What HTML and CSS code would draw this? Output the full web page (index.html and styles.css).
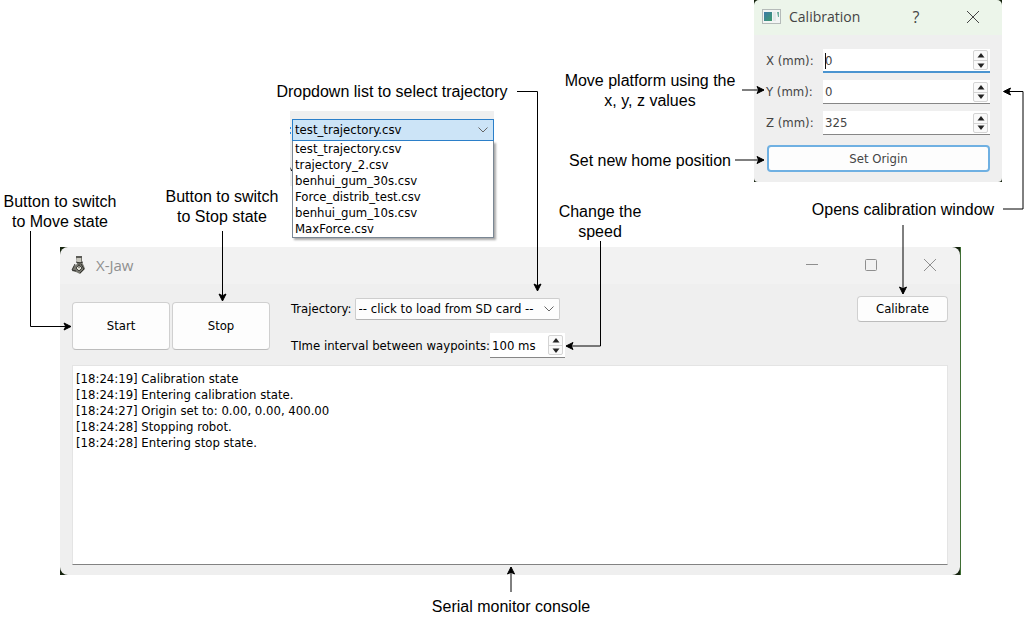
FILE: index.html
```html
<!DOCTYPE html>
<html lang="en">
<head>
<meta charset="utf-8">
<title>X-Jaw control window</title>
<link rel="stylesheet" href="styles.css">
</head>
<body>
<main class="canvas">

  <section class="window main-window" aria-label="X-Jaw">
    <header class="titlebar">
      <svg class="app-icon" width="16" height="20" viewBox="0 0 16 20" aria-hidden="true">
        <path d="M5 1h6v6l2 4 1 3-5 5-4-2-4-1 1-4 4-3z" fill="#77776f"/>
        <path d="M5 1h6v2H5z" fill="#5b5b56"/>
        <path d="M6 3h4v4H6z" fill="#c9c8bf"/>
        <path d="M5 7l4 1 3-1M4 9l-3 6 4 1M10 9l3 5-4 4" fill="none" stroke="#33332f"/>
        <path d="M5 13l3-3 3 3-3 3z" fill="#deddd3" stroke="#44443f"/>
        <path d="M8 9v4" stroke="#44443f"/>
      </svg>
      <h1 class="title">X-Jaw</h1>
      <div class="window-buttons">
        <button class="window-button" aria-label="Minimize"><svg width="14" height="14" viewBox="0 0 14 14"><path d="M1 6.500h12"/></svg></button>
        <button class="window-button" aria-label="Maximize"><svg width="14" height="14" viewBox="0 0 14 14"><rect x="1.500" y="1.500" width="11" height="11" rx="1"/></svg></button>
        <button class="window-button" aria-label="Close"><svg width="14" height="14" viewBox="0 0 14 14"><path d="M1 1l12 12M13 1L1 13"/></svg></button>
      </div>
    </header>
    <div class="window-body">
      <div class="toolbar">
        <div class="run-buttons">
          <button class="button run">Start</button>
          <button class="button run">Stop</button>
        </div>
        <div class="settings">
          <div class="field trajectory-field">
            <label for="trajectory">Trajectory:</label>
            <span class="combo">
              <select id="trajectory"><option>-- click to load from SD card --</option></select>
              <svg class="chevron" width="10" height="6" viewBox="0 0 10 6" aria-hidden="true"><path d="M.5.5L5 5 9.500.5"/></svg>
            </span>
          </div>
          <div class="field">
            <label for="interval">TIme interval between waypoints:</label>
            <span class="spin interval">
              <input id="interval" type="text" value="100 ms">
              <span class="steps">
                <button aria-label="Increase interval"><svg width="8" height="5" viewBox="0 0 8 5"><path d="M4 0l3.500 4.500h-7z"/></svg></button>
                <button aria-label="Decrease interval"><svg width="8" height="5" viewBox="0 0 8 5"><path d="M4 5L.5.5h7z"/></svg></button>
              </span>
            </span>
          </div>
        </div>
        <button class="button calibrate">Calibrate</button>
      </div>
      <textarea class="console" aria-label="Serial monitor console" readonly>[18:24:19] Calibration state
[18:24:19] Entering calibration state.
[18:24:27] Origin set to: 0.00, 0.00, 400.00
[18:24:28] Stopping robot.
[18:24:28] Entering stop state.</textarea>
    </div>
  </section>

  <section class="dropdown" aria-label="Trajectory list">
    <svg class="cut-text" width="2" height="60" viewBox="0 0 2 60" aria-hidden="true"><path d="M0 16h1v2H0zM0 21h1v2H0z" fill="#2f8be0"/><path d="M0 56l2 3v1H1z" fill="#111"/></svg>
    <div class="dropdown-current">
      <select aria-label="Selected trajectory"><option>test_trajectory.csv</option></select>
      <svg class="chevron" width="10" height="6" viewBox="0 0 10 6" aria-hidden="true"><path d="M.5.5L5 5 9.500.5"/></svg>
    </div>
    <ul class="dropdown-list" role="listbox" aria-label="Trajectories">
      <li role="option">test_trajectory.csv</li>
      <li role="option">trajectory_2.csv</li>
      <li role="option">benhui_gum_30s.csv</li>
      <li role="option">Force_distrib_test.csv</li>
      <li role="option">benhui_gum_10s.csv</li>
      <li role="option">MaxForce.csv</li>
    </ul>
  </section>

  <section class="window dialog" aria-label="Calibration">
    <header class="titlebar">
      <svg class="dialog-icon" width="19" height="15" viewBox="0 0 19 15" aria-hidden="true">
        <defs><linearGradient id="pane" x2="1" y2="1"><stop stop-color="#3d79a8"/><stop offset="1" stop-color="#3f9b6d"/></linearGradient></defs>
        <rect x=".5" y=".5" width="18" height="14" fill="#f3f5f4" stroke="#b5bbb9"/>
        <rect x="2" y="3" width="8" height="9" fill="url(#pane)"/>
        <rect x="11" y="3" width="3" height="9" fill="#e3e8e8"/>
        <path d="M15 3h2v5h-1z" fill="#6fae9d"/>
      </svg>
      <h2 class="title">Calibration</h2>
      <button class="window-button help" aria-label="Help">?</button>
      <button class="window-button" aria-label="Close"><svg width="14" height="14" viewBox="0 0 14 14"><path d="M1 1l12 12M13 1L1 13"/></svg></button>
    </header>
    <form class="dialog-body">
      <div class="axis">
        <label for="axis-x">X (mm):</label>
        <span class="spin focused"><input id="axis-x" type="text" value="0"><span class="caret"></span>
          <span class="steps"><button type="button" aria-label="Increase X"><svg width="8" height="5" viewBox="0 0 8 5"><path d="M4 0l3.500 4.500h-7z"/></svg></button><button type="button" aria-label="Decrease X"><svg width="8" height="5" viewBox="0 0 8 5"><path d="M4 5L.5.5h7z"/></svg></button></span></span>
      </div>
      <div class="axis">
        <label for="axis-y">Y (mm):</label>
        <span class="spin"><input id="axis-y" type="text" value="0">
          <span class="steps"><button type="button" aria-label="Increase Y"><svg width="8" height="5" viewBox="0 0 8 5"><path d="M4 0l3.500 4.500h-7z"/></svg></button><button type="button" aria-label="Decrease Y"><svg width="8" height="5" viewBox="0 0 8 5"><path d="M4 5L.5.5h7z"/></svg></button></span></span>
      </div>
      <div class="axis">
        <label for="axis-z">Z (mm):</label>
        <span class="spin"><input id="axis-z" type="text" value="325">
          <span class="steps"><button type="button" aria-label="Increase Z"><svg width="8" height="5" viewBox="0 0 8 5"><path d="M4 0l3.500 4.500h-7z"/></svg></button><button type="button" aria-label="Decrease Z"><svg width="8" height="5" viewBox="0 0 8 5"><path d="M4 5L.5.5h7z"/></svg></button></span></span>
      </div>
      <button type="button" class="button set-origin">Set Origin</button>
    </form>
  </section>

  <p class="note note-move">Button to switch<br>to Move state</p>
  <p class="note note-stop">Button to switch<br>to Stop state</p>
  <p class="note note-dropdown">Dropdown list to select trajectory</p>
  <p class="note note-speed">Change the<br>speed</p>
  <p class="note note-console">Serial monitor console</p>
  <p class="note note-platform">Move platform using the<br>x, y, z values</p>
  <p class="note note-home">Set new home position</p>
  <p class="note note-calibration">Opens calibration window</p>

  <svg class="arrows arrows-left" width="1032" height="622" viewBox="0 0 1032 622" aria-hidden="true">
    <defs>
      <marker id="head" viewBox="0 0 10 10" refX="8" refY="5" markerWidth="10" markerHeight="10" markerUnits="userSpaceOnUse" orient="auto"><path d="M8.500 5L1.500 8.500 3.200 5 1.500 1.500z"/></marker>
    </defs>
    <path d="M30.500 231v95.500H70.500"/>
    <path d="M222.500 231v69.500"/>
    <path d="M517 91.500h20.500v199"/>
    <path d="M600.500 241v105H566.500"/>
    <path d="M511 592v-24.500"/>
  </svg>
  <svg class="arrows arrows-right" width="1032" height="622" viewBox="0 0 1032 622" aria-hidden="true">
    <path d="M742 90h21.500"/>
    <path d="M735 160h28.500"/>
    <path d="M903 225v68.500"/>
    <path d="M1003 209h20V91.500h-19"/>
  </svg>
</main>
</body>
</html>
```
FILE: styles.css
```css
* { box-sizing: border-box; }

body {
  margin: 0;
  background: #fff;
  color: #000;
  font: 13px/16px "DejaVu Sans Condensed", "DejaVu Sans", sans-serif;
}

button, input, select, textarea {
  margin: 0;
  padding: 0;
  border: 0;
  border-radius: 0;
  background: transparent;
  color: inherit;
  font: inherit;
}

select { appearance: none; }
h1, h2, p, ul { margin: 0; padding: 0; }

/* Diagram canvas: windows and notes are pinned on it */
.canvas {
  position: relative;
  min-width: 1032px;
  min-height: 622px;
  overflow: hidden;
}

.window { position: absolute; background: #16240f; }

.titlebar { display: flex; align-items: center; }

.title {
  flex: 1;
  font-family: "Open Sans", "Noto Sans", sans-serif;
  font-weight: 400;
}

.window-button {
  display: flex;
  align-items: center;
  justify-content: center;
}

.window-button svg { fill: none; stroke: currentColor; }

.button {
  border: 1px solid #d0d0d0;
  border-bottom-color: #bcbcbc;
  border-radius: 4px;
  background: #fdfdfd;
}

/* Main window */
.main-window {
  top: 247px;
  left: 60px;
  right: 71px;
  border-right: 1px solid #3f6e34;
}

.main-window .titlebar {
  height: 37px;
  padding: 0 16px 2px 11px;
  border-radius: 8px 8px 0 0;
  background: #f2f2f2;
  color: #8f8f8f;
}

.main-window .title { padding-left: 9px; font-size: 15px; line-height: 20px; }
.window-buttons { display: flex; gap: 31px; }
.window-buttons .window-button { width: 28px; height: 28px; }

.window-body {
  padding: 12px 12px 10px;
  border-radius: 0 0 8px 8px;
  background: #efefef;
}

.toolbar { display: flex; align-items: flex-start; }
.run-buttons { display: flex; gap: 2px; padding-top: 6px; }
.run { width: 98px; height: 48px; }

.settings {
  display: flex;
  flex: 1;
  flex-direction: column;
  gap: 13px;
  padding: 2px 0 0 21px;
}

.field { display: flex; align-items: center; }
.trajectory-field { gap: 3px; }

.combo { position: relative; display: flex; }

.combo select {
  width: 205px;
  height: 22px;
  padding: 0 24px 0 3px;
  border: 1px solid #cecece;
  border-bottom-color: #b4b4b4;
  border-radius: 2px;
  background: #fdfdfd;
}

.chevron {
  position: absolute;
  top: 8px;
  right: 6px;
  fill: none;
  stroke: #666;
  pointer-events: none;
}

.spin {
  position: relative;
  display: flex;
  align-items: center;
  height: 24px;
  padding-right: 2px;
  border-bottom: 1px solid #868686;
  background: #fff;
}

.spin input { flex: 1; min-width: 0; height: 20px; padding-left: 2px; }
.interval { width: 75px; height: 25px; }

.steps {
  display: flex;
  flex-direction: column;
  width: 15px;
  border: 1px solid #d4d4d4;
  border-radius: 2px;
  background: #fafafa;
}

.steps button {
  display: flex;
  align-items: center;
  justify-content: center;
  height: 9px;
}

.steps button + button { border-top: 1px solid #d4d4d4; }
.steps svg { fill: #222; }
.calibrate { width: 91px; height: 26px; }

.console {
  display: block;
  width: 100%;
  height: 200px;
  margin-top: 7px;
  padding: 5px 3px;
  border: 1px solid #e4e4e4;
  border-bottom-color: #828282;
  background: #fff;
  resize: none;
  overflow: hidden;
}

/* Opened trajectory list */
.dropdown {
  position: absolute;
  top: 111px;
  left: 290px;
  width: 204px;
  padding: 8px 0 0 2px;
  background: linear-gradient(#efefef 75px, transparent 75px);
}

.cut-text { position: absolute; top: 0; left: 0; }
.dropdown-current { position: relative; }

.dropdown-current select {
  display: block;
  width: 100%;
  height: 22px;
  padding-left: 2px;
  border: 1px solid #2b7fc9;
  background: #cce4f7;
}

.dropdown-list {
  padding: 0 2px;
  border: 1px solid #7a8794;
  border-top: 0;
  background: #fff;
  box-shadow: 2px 2px 2px #aaa;
  list-style: none;
}

/* Calibration dialog */
.dialog { top: 0; right: 30px; width: 248px; color: #444; }

.dialog .titlebar {
  height: 35px;
  padding: 0 22px 2px 8px;
  border-radius: 5px 5px 0 0;
  background: #ecf5ea;
}

.dialog .title { padding-left: 8px; font-size: 14px; line-height: 20px; }
.dialog .window-button { width: 14px; height: 20px; }
.dialog .help { margin-right: 43px; font: 16px/20px "Open Sans", sans-serif; }

.dialog-body {
  display: flex;
  flex-direction: column;
  gap: 7px;
  padding: 14px 12px 10px;
  border-radius: 0 0 4px 4px;
  background: #efefef;
}

.axis { display: grid; grid-template-columns: 57px 1fr; align-items: center; }
.focused { border-bottom: 2px solid #4a94d0; }

.caret {
  position: absolute;
  top: 4px;
  left: 2px;
  width: 1px;
  height: 16px;
  background: #111;
}

.set-origin {
  height: 27px;
  margin: 3px 0 0 1px;
  border: 2px solid #6fb0e2;
}

/* Notes and arrows */
.note {
  position: absolute;
  font: 16px/20px "Liberation Sans", Arial, sans-serif;
  text-align: center;
  white-space: nowrap;
}

.note-move { top: 192px; left: 0; width: 120px; }
.note-stop { top: 187px; left: 162px; width: 120px; }
.note-dropdown { top: 82px; left: 272px; width: 240px; }
.note-speed { top: 202px; left: 540px; width: 120px; }
.note-console { top: 597px; left: 421px; width: 180px; }
.note-platform { top: 71px; right: 292px; width: 180px; }
.note-home { top: 151px; right: 292px; width: 180px; }
.note-calibration { top: 200px; right: 29px; width: 200px; }

.arrows { position: absolute; top: 0; pointer-events: none; }
.arrows path { fill: none; stroke: #000; marker-end: url(#head); }
.arrows marker path { fill: #000; marker-end: none; }
.arrows-left { left: 0; }
.arrows-right { right: 0; }
```
